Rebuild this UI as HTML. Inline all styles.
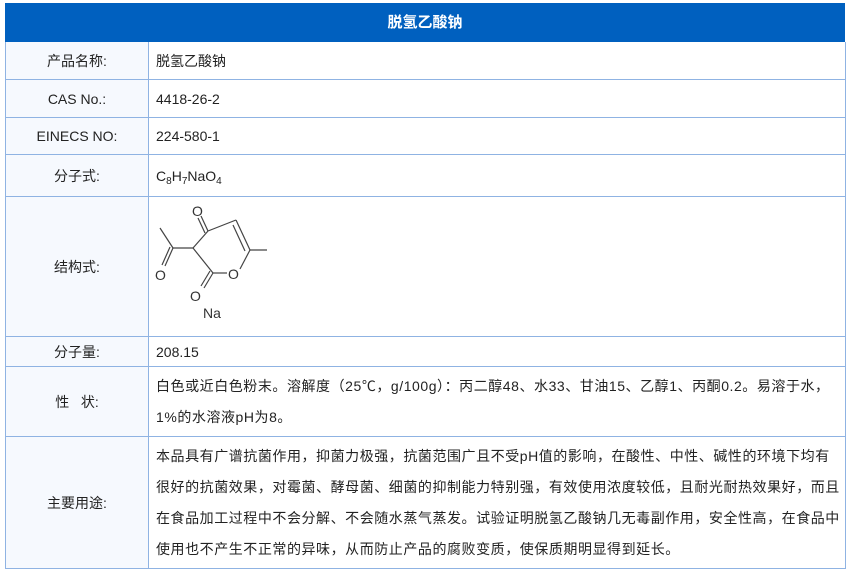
<!DOCTYPE html>
<html><head><meta charset="utf-8"><style>
body{margin:0;background:#fff;width:850px;height:576px;overflow:hidden;font-family:"Liberation Sans","Noto Sans CJK SC",sans-serif;color:#222;font-size:14px}
.h{position:absolute;left:5px;top:3px;width:840px;height:39px;background:#0060bf;color:#fff;font-weight:bold;font-size:15px;text-align:center;line-height:39px}
.r{position:absolute;left:5px;width:839px;border:1px solid #8fb3e3;border-top:none;}
.l{position:absolute;left:0;top:0;bottom:0;width:142px;background:#f6f9fe;border-right:1px solid #8fb3e3;display:flex;align-items:center;justify-content:center}
.v{position:absolute;left:150px;top:0;bottom:0;right:4px;display:flex;align-items:center}
.t{line-height:31px;letter-spacing:0.55px}
sub{font-size:10px;vertical-align:-3px;line-height:0}
</style></head><body>
<div class="h">脱氢乙酸钠</div>
<div class="r" style="top:42px;height:37px"><div class="l">产品名称:</div><div class="v">脱氢乙酸钠</div></div>
<div class="r" style="top:80px;height:37px"><div class="l">CAS No.:</div><div class="v">4418-26-2</div></div>
<div class="r" style="top:118px;height:36px"><div class="l">EINECS NO:</div><div class="v">224-580-1</div></div>
<div class="r" style="top:155px;height:41px"><div class="l">分子式:</div><div class="v"><span>C<sub>8</sub>H<sub>7</sub>NaO<sub>4</sub></span></div></div>
<div class="r" style="top:197px;height:139px"><div class="l">结构式:</div></div>
<div class="r" style="top:337px;height:29px"><div class="l">分子量:</div><div class="v">208.15</div></div>
<div class="r" style="top:367px;height:69px"><div class="l">性&nbsp;&nbsp;&nbsp;状:</div><div class="v"><div class="t">白色或近白色粉末。溶解度（25℃，g/100g）：丙二醇48、水33、甘油15、乙醇1、丙酮0.2。易溶于水，1%的水溶液pH为8。</div></div></div>
<div class="r" style="top:437px;height:131px"><div class="l">主要用途:</div><div class="v"><div class="t">本品具有广谱抗菌作用，抑菌力极强，抗菌范围广且不受pH值的影响，在酸性、中性、碱性的环境下均有很好的抗菌效果，对霉菌、酵母菌、细菌的抑制能力特别强，有效使用浓度较低，且耐光耐热效果好，而且在食品加工过程中不会分解、不会随水蒸气蒸发。试验证明脱氢乙酸钠几无毒副作用，安全性高，在食品中使用也不产生不正常的异味，从而防止产品的腐败变质，使保质期明显得到延长。</div></div></div>
<svg style="position:absolute;left:0;top:0" width="850" height="576">
<g stroke="#444" stroke-width="1.2" fill="none">
<line x1="160" y1="228" x2="173" y2="248"/>
<line x1="173" y1="248" x2="165" y2="266"/><line x1="170" y1="247" x2="162" y2="265"/>
<line x1="173" y1="248" x2="193" y2="248"/>
<line x1="193" y1="248" x2="208" y2="231"/>
<line x1="208" y1="231" x2="201" y2="216"/><line x1="205" y1="233" x2="198" y2="218"/>
<line x1="208" y1="231" x2="236" y2="220"/>
<line x1="236" y1="220" x2="250" y2="250"/><line x1="233" y1="225" x2="245" y2="251"/>
<line x1="250" y1="250" x2="267" y2="250"/>
<line x1="250" y1="250" x2="240" y2="269"/>
<line x1="227" y1="273" x2="213" y2="273"/>
<line x1="193" y1="248" x2="213" y2="273"/>
<line x1="213" y1="273" x2="204" y2="288"/><line x1="210" y1="271" x2="201" y2="286"/>
</g>
<g font-size="14" fill="#333" font-family="Liberation Sans,sans-serif">
<text x="192" y="216">O</text><text x="155" y="280">O</text><text x="228" y="279">O</text><text x="190" y="301">O</text><text x="203" y="318">Na</text>
</g></svg>
</body></html>
